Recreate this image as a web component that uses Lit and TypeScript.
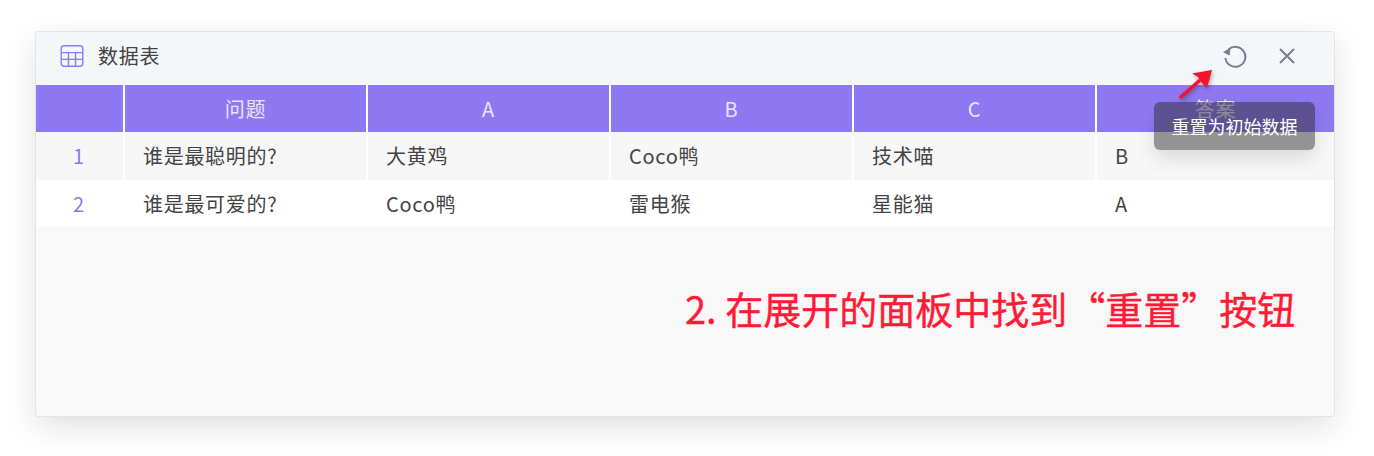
import { LitElement, html, css } from "lit";
import { customElement } from "lit/decorators.js";

const FONT = css`"Noto Sans CJK SC", "Noto Sans", sans-serif`;

@customElement("app-root")
export class AppRoot extends LitElement {
  static styles = css`
    :host { display: block; width: 1374px; height: 456px; padding: 32px 40px 0 36px; box-sizing: border-box; background: #fff; font-family: ${FONT}; overflow: hidden; }
    .win { position: relative; width: 1298px; height: 384px; box-sizing: border-box; background: #f8f8f8; border-radius: 3px; box-shadow: 0 0 0 1px #e4e4e4, 0 10px 30px rgba(0,0,0,.13); }
    .head { height: 53px; background: #f4f7fa; display: flex; align-items: center; padding: 0 0 6px 24px; color: #444; font-size: 20px; letter-spacing: .7px; border-radius: 3px 3px 0 0; box-sizing: border-box; }
    .title { margin-left: 14px; line-height: 24px; }
    .tools { margin-left: auto; display: flex; align-items: center; gap: 30px; padding-right: 38px; }
    .tools svg { display: block; }
    .grid { display: grid; grid-template-columns: 87px 241px 241px 241px 241px 1fr; column-gap: 2px; background: #fff; }
    .th { height: 47px; background: #8f79f2; color: #e9e4fd; font-size: 20px; letter-spacing: .7px; display: flex; align-items: center; justify-content: center; }
    .td { height: 47px; display: flex; align-items: center; padding: 0 0 2px 18px; box-sizing: border-box; font-size: 20px; letter-spacing: .7px; color: #444; }
    .r1 { background: #f7f7f7; }
    .first { margin-top: 1px; }
    .r2 { background: #fff; padding-bottom: 0; }
    .idx { justify-content: center; padding-left: 0; padding-right: 1px; color: #8f79f2; }
    .tip { position: absolute; left: 1118px; top: 70px; width: 161px; height: 48px; border-radius: 6px; background: rgba(40,40,40,.48); color: #fff; font-size: 18px; display: flex; align-items: center; justify-content: center; box-shadow: 0 8px 20px rgba(0,0,0,.12); box-sizing: border-box; }
    .arrow { position: absolute; left: 1140px; top: 36px; filter: drop-shadow(1px 2px 2px rgba(0,0,0,.35)); }
    .note { position: absolute; left: 649px; top: 251px; font-size: 38px; line-height: 50px; font-weight: 400; -webkit-text-stroke: .4px #ff1a36; color: #ff1a36; white-space: nowrap; }
  `;

  render() {
    const rows = [
      ["1", "谁是最聪明的?", "大黄鸡", "Coco鸭", "技术喵", "B"],
      ["2", "谁是最可爱的?", "Coco鸭", "雷电猴", "星能猫", "A"],
    ];
    return html`
      <div class="win">
        <div class="head">
          <svg width="24" height="24" viewBox="0 0 24 24" fill="none" stroke="#8f79f2" stroke-width="1.4">
            <rect x="1.2" y="1.7" width="21.6" height="20.6" rx="3"/>
            <path d="M1.2 8.6H22.8M1.2 15.4H22.8M8.5 8.6V22.3M15.5 8.6V22.3"/>
          </svg>
          <span class="title">数据表</span>
          <div class="tools">
            <svg width="26" height="26" viewBox="0 0 26 26" fill="none" stroke="#7d7a93" stroke-width="2">
              <path d="M6.5 6.5A10 10 0 1 1 3.4 15"/>
              <path d="M1 9.2L7.6 12.6L8.4 4.8Z" fill="#7d7a93" stroke="none"/>
            </svg>
            <svg width="18" height="18" viewBox="0 0 18 18" fill="none" stroke="#7d7a93" stroke-width="2">
              <path d="M2 2L16 16M16 2L2 16"/>
            </svg>
          </div>
        </div>
        <div class="grid">
          ${["", "问题", "A", "B", "C", "答案"].map((h) => html`<div class="th">${h}</div>`)}
        </div>
        ${rows.map(
          (r, i) => html`<div class="grid ${i === 0 ? "first" : ""}">
            ${r.map(
              (c, j) => html`<div class="td ${i === 0 ? "r1" : "r2"} ${j === 0 ? "idx" : ""}">${c}</div>`
            )}
          </div>`
        )}
        <div class="tip">重置为初始数据</div>
        <svg class="arrow" width="40" height="34" viewBox="0 0 40 34" fill="none">
          <path d="M5 29L23 13" stroke="#f5102e" stroke-width="3.6" stroke-linecap="round"/>
          <path d="M36 2L16 5.5L22 9L26 15L31 20Z" fill="#f5102e"/>
        </svg>
        <div class="note">2. 在展开的面板中找到“重置”按钮</div>
      </div>
    `;
  }
}
